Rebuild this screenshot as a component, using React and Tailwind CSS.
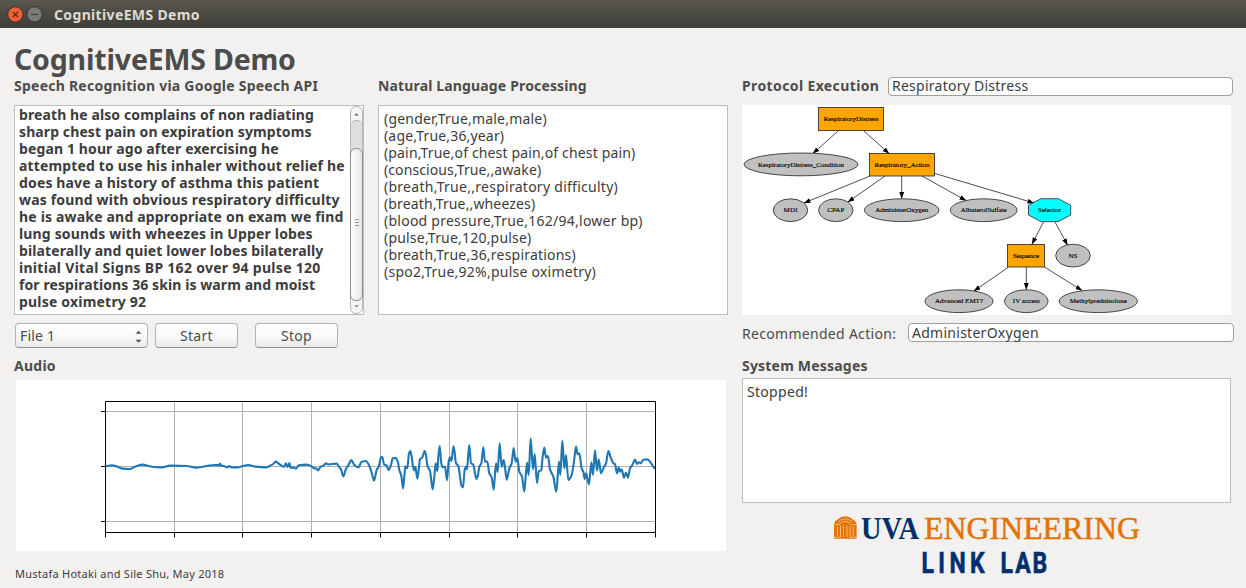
import React from "react";

const transcript = [
  ["breath he also complains of non radiating", "tracking-[0.1px]"],
  ["sharp chest pain on expiration symptoms", "tracking-[0.1px]"],
  ["began 1 hour ago after exercising he", "tracking-[0.12px]"],
  ["attempted to use his inhaler without relief he", "tracking-[0.155px]"],
  ["does have a history of asthma this patient", "tracking-[0.14px]"],
  ["was found with obvious respiratory difficulty", "tracking-[0.17px]"],
  ["he is awake and appropriate on exam we find", "tracking-[0.18px]"],
  ["lung sounds with wheezes in Upper lobes", "tracking-[0.16px]"],
  ["bilaterally and quiet lower lobes bilaterally", "tracking-[0.12px]"],
  ["initial Vital Signs BP 162 over 94 pulse 120", "tracking-[0.29px]"],
  ["for respirations 36 skin is warm and moist", "tracking-[0.09px]"],
  ["pulse oximetry 92", "tracking-[0.2px]"],
];

const concepts = [
  ["(gender,True,male,male)", "tracking-[0.2px]"],
  ["(age,True,36,year)", "tracking-[0.17px]"],
  ["(pain,True,of chest pain,of chest pain)", "tracking-[0.15px]"],
  ["(conscious,True,,awake)", "tracking-[0.1px]"],
  ["(breath,True,,respiratory difficulty)", "tracking-[0.27px]"],
  ["(breath,True,,wheezes)", "tracking-[0.14px]"],
  ["(blood pressure,True,162/94,lower bp)", "tracking-[0.25px]"],
  ["(pulse,True,120,pulse)", "tracking-[0.2px]"],
  ["(breath,True,36,respirations)", "tracking-[0.21px]"],
  ["(spo2,True,92%,pulse oximetry)", "tracking-[0.24px]"],
];

const quiet = "46,259 65,256 85,261 97,266 120,267 140,258 158,254 180,259 215,262 240,257 290,258 318,263 350,258 375,255 388,256 390,251 395,257 405,259 412,262 418,258 425,262 445,262 458,258 475,255 495,260 530,262 540,257 550,252 557,245 565,250 572,255 582,260 588,250 593,261 598,249 602,264 610,262 618,266 626,256 650,254 665,259 672,265 678,265 684,271 692,260 700,257 707,250 715,253 740,251 748,262 753,268 760,289 768,266 775,256 784,240 792,254 805,262 815,245 827,243 836,253 845,278 852,302 860,270 867,258";
const loud = "873,231 877,231 882,253 890,257 896,270 903,255 908,235 918,234 924,248 928,270 934,288 939,325 943,290 946,259 952,265 957,220 961,213 965,230 969,260 973,271 976,260 982,296 986,270 990,238 997,232 1004,213 1008,225 1012,257 1020,273 1028,328 1033,290 1037,250 1042,273 1045,230 1049,198 1054,250 1058,262 1065,260 1071,301 1076,245 1080,232 1084,243 1088,215 1091,199 1098,250 1105,258 1110,290 1114,315 1119,322 1124,270 1128,260 1131,268 1135,220 1138,196 1143,250 1150,254 1154,275 1159,297 1164,285 1168,260 1174,250 1180,202 1185,245 1192,245 1198,280 1205,292 1211,329 1218,250 1223,276 1229,190 1235,260 1241,240 1246,270 1250,299 1258,265 1265,250 1271,204 1277,245 1282,234 1288,275 1296,290 1303,335 1311,248 1316,285 1322,176 1329,268 1334,222 1341,309 1346,275 1354,270 1358,230 1363,203 1368,233 1374,228 1380,268 1390,290 1399,335 1407,245 1411,285 1417,182 1423,265 1428,225 1435,300 1445,285 1452,245 1458,200 1463,223 1468,220 1475,265 1480,275 1484,297 1488,280 1497,313 1504,247 1509,285 1515,211 1521,272 1526,238 1533,280 1540,265 1548,250 1555,213 1562,232 1570,250 1575,253 1581,280 1586,262 1590,275 1595,268 1602,293 1608,278 1614,293 1620,265 1627,255 1635,239 1641,252 1647,247 1652,250 1660,239 1672,238 1680,245 1696,266";

// Joins the samples with a curve whose tangents are flat at local peaks.
function smoothPath(samples) {
  const p = samples.split(" ").map((s) => s.split(",").map(Number));
  const slope = p.map(([x, y], i) => {
    if (i === 0 || i === p.length - 1) return 0;
    const a = (y - p[i - 1][1]) / (x - p[i - 1][0]);
    const b = (p[i + 1][1] - y) / (p[i + 1][0] - x);
    return a * b <= 0 ? 0 : (2 * a * b) / (a + b);
  });
  let d = "M" + p[0].join(" ");
  for (let i = 1; i < p.length; i++) {
    const [x0, y0] = p[i - 1];
    const [x1, y1] = p[i];
    const h = (x1 - x0) / 3;
    d += `C${x0 + h} ${y0 + h * slope[i - 1]} ${x1 - h} ${y1 - h * slope[i]} ${x1} ${y1}`;
  }
  return d;
}

function Waveform() {
  return (
    <svg className="block h-full w-full" viewBox="16 380 710 171" fill="none">
      <path
        d="M174.5 402V532M242.5 402V532M311.5 402V532M380.5 402V532M449.5 402V532M517.5 402V532M586.5 402V532M106 411.5H655M106 466.5H655M106 521.5H655"
        stroke="#b0b0b0"
      />
      <path
        d={smoothPath(quiet + " " + loud)}
        transform="translate(90 380) scale(0.33333)"
        stroke="#1f77b4"
        strokeWidth="6.3"
        strokeLinejoin="round"
      />
      <path
        d="M105.5 401.5H655.5V532.5H105.5ZM101 411.5H105M101 466.5H105M101 521.5H105M105.5 533V537.5M174.5 533V537.5M242.5 533V537.5M311.5 533V537.5M380.5 533V537.5M449.5 533V537.5M517.5 533V537.5M586.5 533V537.5M655.5 533V537.5"
        stroke="#000"
      />
    </svg>
  );
}

const leaves = [
  ["RespiratoryDistress_Condition", 801, 164.4, 57, 86],
  ["MDI", 790.5, 210.2, 17.2, 14],
  ["CPAP", 835.8, 210.2, 17.2, 17],
  ["AdministerOxygen", 901.7, 210.2, 37.3, 53],
  ["AlbuterolSulfate", 983.7, 210.2, 33.4, 46],
  ["NS", 1073, 255.6, 17.3, 9],
  ["Advanced EMT?", 959, 301.2, 34, 48],
  ["IV access", 1026.3, 301.2, 21.7, 27],
  ["Methylprednisolone", 1098.3, 301.2, 39.2, 57],
];

const branches = [
  ["RespiratoryDistress", 818.5, 107.5, 65, 23, 55],
  ["Respiratory_Action", 869.5, 153.5, 65, 22.5, 55],
  ["Sequence", 1007.5, 244.5, 37, 22.5, 26],
];

const edges = [
  [838, 131, 813, 153.5],
  [864, 131, 889, 153.5],
  [870, 176, 804, 203],
  [885, 176, 848, 202],
  [901.7, 176, 901.7, 198.5],
  [922, 176, 966, 200.5],
  [935, 173.5, 1034, 203],
  [1043.5, 222, 1032, 244],
  [1055, 222, 1067.5, 245],
  [1008, 267.5, 974, 291],
  [1026.3, 267, 1026.3, 289.5],
  [1044.5, 267, 1082, 290.5],
];

function ProtocolTree() {
  return (
    <svg
      className="block h-full w-full font-['Liberation_Serif',serif] text-[7px]"
      viewBox="742 105 489 210"
    >
      <defs>
        <marker id="arrow" markerWidth="8" markerHeight="6" refX="6.5" refY="2.4" orient="auto" markerUnits="userSpaceOnUse">
          <path d="M0 0L7 2.4L0 4.8Z" />
        </marker>
      </defs>
      <g stroke="#222" strokeWidth="0.8">
        {edges.map(([x1, y1, x2, y2], i) => (
          <line key={i} x1={x1} y1={y1} x2={x2} y2={y2} markerEnd="url(#arrow)" />
        ))}
        {leaves.map(([name, cx, cy, rx]) => (
          <ellipse key={name} cx={cx} cy={cy} rx={rx} ry="11.4" fill="#c0c0c0" />
        ))}
        {branches.map(([name, x, y, w, h]) => (
          <rect key={name} x={x} y={y} width={w} height={h} fill="#ffa500" />
        ))}
        <path d="M1028.5 205.2L1041 198.7H1058.3L1070.7 205.2V215L1058.3 221.6H1041L1028.5 215Z" fill="#0ff" />
      </g>
      <g textAnchor="middle" fill="#000" stroke="#000" strokeWidth="0.15">
        {leaves.map(([name, cx, cy, , len]) => (
          <text key={name} x={cx} y={cy + 2.2} textLength={len}>{name}</text>
        ))}
        {branches.map(([name, x, y, w, h, len]) => (
          <text key={name} x={x + w / 2} y={y + h / 2 + 2.2} textLength={len}>{name}</text>
        ))}
        <text x="1049.6" y="212.4" textLength="23">Selector</text>
      </g>
    </svg>
  );
}

function Logo() {
  return (
    <svg className="block h-[80px] w-[316px]" viewBox="829 504 316 80">
      <path d="M834 538.7V524Q834.5 521 837.5 519.5Q845 513 853 519.5Q856 521 856.6 524V538.7Z" fill="#e57200" />
      <path
        d="M834.5 524.5H839Q845 518 851.5 524.5H856M837.5 526.5V536M840.5 525.5V537M843.5 525.5V537M847 525.5V537M850 525.5V537M853.2 526.5V536M834 537.2H841M850 537.2H856.5M838 522Q845 515.5 852.5 522"
        stroke="#f6cfa7"
        strokeWidth="0.8"
        fill="none"
      />
      <text x="861" y="538.8" textLength="58" lengthAdjust="spacingAndGlyphs" fill="#002f6c" className="font-['Liberation_Serif',serif] text-[32px] font-bold">UVA</text>
      <text x="924" y="538.8" textLength="216" lengthAdjust="spacingAndGlyphs" fill="#e57200" stroke="#e57200" strokeWidth="0.5" className="font-['Liberation_Serif',serif] text-[32px]">ENGINEERING</text>
      <g fill="#002f6c" stroke="#002f6c" strokeWidth="0.6" className="font-['Roboto',sans-serif] text-[29.5px] font-bold">
        <text transform="translate(921.5 573) scale(0.78 1)" textLength="81">LINK</text>
        <text transform="translate(1000.5 573) scale(0.78 1)" textLength="60">LAB</text>
      </g>
    </svg>
  );
}

function Heading({ children, className = "" }) {
  return <h2 className={"whitespace-nowrap text-sm font-bold leading-[18px] text-[#4c4c4c] " + className}>{children}</h2>;
}

function PushButton({ children }) {
  return (
    <button className="h-[25px] w-[83px] rounded-[4px] border border-[#b5b3b0] border-b-[#92908d] bg-linear-to-b from-white via-[#fafafa] to-[#ebeae9] text-sm leading-[22px] tracking-[0.3px] text-[#4c4c4c]">
      {children}
    </button>
  );
}

function ScrollBar() {
  return (
    <div className="flex h-full w-[13px] flex-col rounded-[6px] border border-[#b9b7b4] bg-[#f5f4f3]">
      <svg className="h-[13px] w-[11px] shrink-0" viewBox="0 0 11 13"><path d="M3.5 8.5L5.5 6.3L7.5 8.5Z" fill="#555" /></svg>
      <div className="h-[35px] w-[11px] shrink-0 rounded-t-[5px] border-t border-[#b5b3b0] bg-[#dfdedc]" />
      <div className="-mx-px -mt-[7px] flex h-[153px] shrink-0 flex-col items-center justify-center gap-[2px] rounded-[6px] border border-[#8e8c89] bg-linear-to-r from-white to-[#e6e5e4] pb-1">
        <i className="h-px w-[4px] bg-[#999]" />
        <i className="h-px w-[4px] bg-[#999]" />
        <i className="h-px w-[4px] bg-[#999]" />
      </div>
      <svg className="h-[11px] w-[11px] shrink-0" viewBox="0 0 11 11"><path d="M3 4L5.5 6.8L8 4Z" fill="#999" /></svg>
    </div>
  );
}

export default function App() {
  return (
    <div className="h-[588px] w-[1246px] overflow-hidden bg-[#f2f1f0] font-['Noto_Sans',sans-serif] text-[#3c3c3c]">
      <header className="flex h-7 items-center bg-linear-to-b from-[#59574f] to-[#3e3d38] pl-[7px]">
        <svg className="h-5 w-[37px] shrink-0" viewBox="0 0 37 20" fill="none">
          <circle cx="8.4" cy="10.4" r="7.7" fill="#ee6038" stroke="#33322e" />
          <path d="M5.8 7.8L11 13M11 7.8L5.8 13" stroke="#5b2416" strokeWidth="1.2" />
          <circle cx="27.6" cy="10.4" r="7.7" fill="#7c7a74" stroke="#33322e" />
          <path d="M24 10.5H31" stroke="#3b3a36" strokeWidth="1.2" />
        </svg>
        <span className="ml-[10px] mt-px text-sm font-bold tracking-[0.35px] text-[#dfdbd2]">CognitiveEMS Demo</span>
      </header>
      <main className="flex h-[560px] gap-[14px] pl-[14px]">
        <section className="w-[714px] shrink-0">
          <h1 className="h-[49px] whitespace-nowrap pt-[13px] text-[28.5px] font-bold leading-[36px] tracking-[-0.18px] text-[#4c4c4c]">CognitiveEMS Demo</h1>
          <div className="flex gap-[14px]">
            <div className="w-[350px]">
              <Heading className="tracking-[0.24px]">Speech Recognition via Google Speech API</Heading>
              <div className="mt-[10px] flex h-[210px] justify-between overflow-hidden border border-[#bfbdba] bg-white pl-1">
                <div className="text-sm font-bold leading-[17px]">
                  {transcript.map(([line, fit]) => (
                    <p key={line} className={"whitespace-nowrap " + fit}>{line}</p>
                  ))}
                </div>
                <ScrollBar />
              </div>
            </div>
            <div className="w-[350px]">
              <Heading className="tracking-[0.15px]">Natural Language Processing</Heading>
              <div className="mt-[10px] h-[210px] border border-[#bfbdba] bg-white pl-[5px] pt-1 text-sm leading-[17px]">
                {concepts.map(([line, fit]) => (
                  <p key={line} className={"whitespace-nowrap " + fit}>{line}</p>
                ))}
              </div>
            </div>
          </div>
          <div className="mt-[8px] flex pl-px">
            <div className="mr-[7px] flex h-[25px] w-[133px] items-center justify-between rounded-[4px] border border-[#b5b3b0] border-b-[#92908d] bg-linear-to-b from-white via-[#fafafa] to-[#ebeae9] pl-1 pr-[5px] text-sm tracking-[0.2px] text-[#4c4c4c]">
              <span>File 1</span>
              <svg className="mt-[3px] h-[14px] w-[7px]" viewBox="0 0 7 14" fill="#555"><path d="M.5 3.8L3.5 .8L6.5 3.8ZM.5 9.7L3.5 12.7L6.5 9.7Z" /></svg>
            </div>
            <PushButton>Start</PushButton>
            <div className="w-[17px]" />
            <PushButton>Stop</PushButton>
          </div>
          <Heading className="mt-[9px] tracking-[0.25px]">Audio</Heading>
          <div className="ml-[2px] mt-[5px] h-[171px] w-[710px] bg-white"><Waveform /></div>
          <p className="ml-px mt-[15px] text-[11px] leading-[16px] tracking-[0.25px]">Mustafa Hotaki and Sile Shu, May 2018</p>
        </section>
        <section className="w-[492px] shrink-0 pt-[48px]">
          <div className="flex h-[20px] items-center">
            <Heading className="w-[146px] tracking-[0.38px]">Protocol Execution</Heading>
            <div className="h-[19px] w-[345px] rounded-[4px] border border-[#a19f9b] bg-white pl-[3px] text-sm leading-[16px] tracking-[0.25px]">Respiratory Distress</div>
          </div>
          <div className="mt-[9px] h-[210px] w-[489px] bg-white"><ProtocolTree /></div>
          <div className="mt-[8px] flex h-[20px]">
            <span className="w-[166px] whitespace-nowrap pt-px text-sm leading-[20px] tracking-[0.3px] text-[#4c4c4c]">Recommended Action:</span>
            <div className="h-[19px] w-[326px] rounded-[4px] border border-[#a19f9b] bg-white pl-[3px] text-sm leading-[17px] tracking-[0.27px]">AdministerOxygen</div>
          </div>
          <Heading className="mt-[14px] tracking-[0.2px]">System Messages</Heading>
          <div className="mt-[3px] h-[125px] w-[489px] border border-[#bfbdba] bg-white pl-1 pt-1 text-sm leading-[17px] tracking-[0.3px]">Stopped!</div>
          <div className="ml-[87px] mt-px"><Logo /></div>
        </section>
      </main>
    </div>
  );
}
